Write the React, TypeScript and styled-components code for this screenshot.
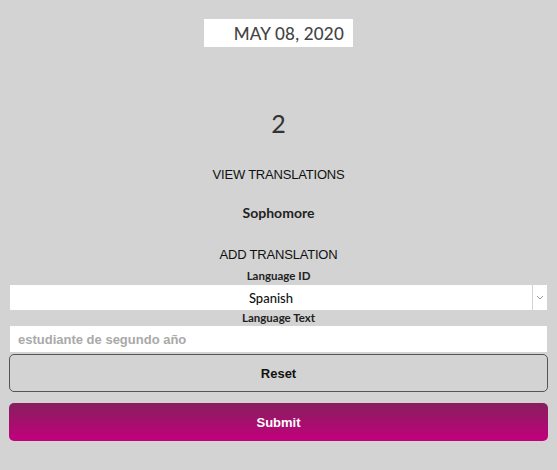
import styled, { createGlobalStyle } from 'styled-components';

const Global = createGlobalStyle`
  html, body {
    margin: 0;
    padding: 0;
    background: #d3d3d3;
  }
  body {
    font-family: 'Liberation Sans', Arial, sans-serif;
  }
`;

const Styled = {
  Page: styled.div`
    display: flex;
    flex-direction: column;
    align-items: center;
    padding: 19px 9px 20px;
    min-height: 470px;
    box-sizing: border-box;
  `,
  DateBox: styled.div`
    width: 149px;
    height: 28px;
    box-sizing: border-box;
    background: #fff;
    display: flex;
    align-items: center;
    justify-content: flex-end;
    padding-right: 9px;
    font-family: Lato, 'Open Sans', sans-serif;
    font-size: 17px;
    font-weight: 500;
    color: #444;
    letter-spacing: 0.2px;
  `,
  Count: styled.div`
    margin-top: 61px;
    height: 30px;
    line-height: 30px;
    font-family: Lato, sans-serif;
    font-size: 25px;
    color: #333;
  `,
  Heading: styled.div<{ $top: number }>`
    margin-top: ${(p) => p.$top}px;
    height: 16px;
    line-height: 16px;
    font-size: 13px;
    letter-spacing: -0.2px;
    color: #111;
  `,
  Level: styled.div`
    margin-top: 22px;
    height: 16px;
    line-height: 16px;
    font-family: Lato, sans-serif;
    font-size: 14px;
    font-weight: 700;
    color: #222;
  `,
  Label: styled.div<{ $top: number }>`
    margin-top: ${(p) => p.$top}px;
    height: 14px;
    line-height: 14px;
    font-family: Lato, sans-serif;
    font-size: 11.5px;
    font-weight: 700;
    color: #222;
  `,
  Select: styled.div`
    align-self: stretch;
    margin: 2px 1px 0;
    height: 25px;
    display: flex;
    gap: 1px;
    background: #d3d3d3;
  `,
  SelectValue: styled.div`
    flex: 1;
    background: #fff;
    display: flex;
    align-items: center;
    justify-content: center;
    font-family: Lato, sans-serif;
    font-size: 13px;
    font-weight: 500;
    color: #111;
  `,
  SelectArrow: styled.div`
    width: 14px;
    background: #fff;
    display: flex;
    align-items: center;
    justify-content: center;
  `,
  Input: styled.input`
    align-self: stretch;
    margin: 1px 1px 0;
    height: 26px;
    box-sizing: border-box;
    border: none;
    outline: none;
    background: #fff;
    padding: 0 8px;
    font-family: 'Liberation Sans', Arial, sans-serif;
    font-size: 13px;
    font-weight: 700;
    color: #333;
    &::placeholder {
      color: #a9a9a9;
    }
  `,
  Button: styled.button<{ $primary?: boolean }>`
    align-self: stretch;
    height: 38px;
    margin-top: ${(p) => (p.$primary ? 11 : 2)}px;
    border-radius: 5px;
    border: ${(p) => (p.$primary ? 'none' : '1px solid #555')};
    background: ${(p) =>
      p.$primary ? 'linear-gradient(to bottom, #861f5f, #c2007c)' : 'transparent'};
    color: ${(p) => (p.$primary ? '#fff' : '#111')};
    font-family: 'Liberation Sans', Arial, sans-serif;
    font-size: 13px;
    font-weight: 700;
    cursor: pointer;
  `,
};

export default function App() {
  return (
    <>
      <Global />
      <Styled.Page>
        <Styled.DateBox>MAY 08, 2020</Styled.DateBox>
        <Styled.Count>2</Styled.Count>
        <Styled.Heading $top={29}>VIEW TRANSLATIONS</Styled.Heading>
        <Styled.Level>Sophomore</Styled.Level>
        <Styled.Heading $top={26}>ADD TRANSLATION</Styled.Heading>
        <Styled.Label $top={6}>Language ID</Styled.Label>
        <Styled.Select>
          <Styled.SelectValue>Spanish</Styled.SelectValue>
          <Styled.SelectArrow>
            <svg width="8" height="5" viewBox="0 0 8 5">
              <path d="M1 1 L4 4 L7 1" fill="none" stroke="#999" strokeWidth="1" />
            </svg>
          </Styled.SelectArrow>
        </Styled.Select>
        <Styled.Label $top={1}>Language Text</Styled.Label>
        <Styled.Input placeholder="estudiante de segundo año" />
        <Styled.Button>Reset</Styled.Button>
        <Styled.Button $primary>Submit</Styled.Button>
      </Styled.Page>
    </>
  );
}
